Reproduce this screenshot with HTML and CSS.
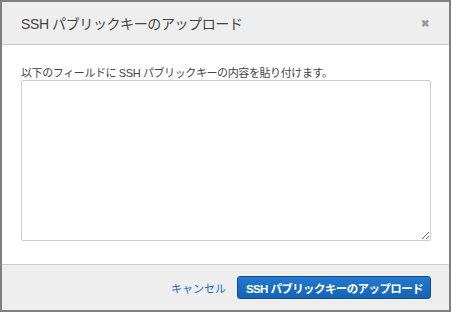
FILE: index.html
```html
<!DOCTYPE html>
<html lang="ja">
<head>
<meta charset="utf-8">
<link rel="stylesheet" href="styles.css">
</head>
<body>
<div class="modal">
  <div class="modal-header">
    <h1 class="modal-title">SSH パブリックキーのアップロード</h1>
    <span class="close">&#x2716;</span>
  </div>
  <div class="modal-body">
    <p class="hint">以下のフィールドに SSH パブリックキーの内容を貼り付けます。</p>
    <textarea class="key-input"></textarea>
  </div>
  <div class="modal-footer">
    <a class="cancel">キャンセル</a>
    <button class="primary">SSH パブリックキーのアップロード</button>
  </div>
</div>
</body>
</html>
```
FILE: styles.css
```css
html, body {
  margin: 0;
  padding: 0;
  background: #fff;
}
.modal {
  width: 451px;
  height: 312px;
  box-sizing: border-box;
  border: 2px solid #7f7f7f;
  display: flex;
  flex-direction: column;
  font-family: "Liberation Sans", "Noto Sans CJK JP", sans-serif;
}
.modal-header {
  height: 42px;
  background: #eeeeee;
  border-bottom: 1px solid #cccccc;
  display: flex;
  align-items: center;
  justify-content: space-between;
  padding: 0 20px 0 19px;
}
.modal-title {
  margin: 0;
  font-size: 14px;
  font-weight: normal;
  color: #444;
  letter-spacing: -0.4px;
}
.close {
  font-size: 10px;
  color: #999;
  font-weight: bold;
}
.modal-body {
  flex: 1;
  padding: 0 18px 0 19px;
  display: flex;
  flex-direction: column;
}
.hint {
  margin: 21px 0 0 0;
  font-size: 11px;
  color: #444;
  letter-spacing: -0.4px;
  line-height: 14px;
}
.key-input {
  height: 161px;
  box-sizing: border-box;
  border: 1px solid #cccccc;
  border-radius: 2px;
  resize: vertical;
  margin: 0;
}
.modal-footer {
  height: 45px;
  background: #eeeeee;
  border-top: 1px solid #cccccc;
  display: flex;
  align-items: center;
  justify-content: flex-end;
  gap: 11px;
  padding: 0 18px 0 0;
}
.cancel {
  color: #1a6cc0;
  font-size: 11px;
}
.primary {
  height: 23px;
  padding: 0 7px 0 8px;
  border: 1px solid #0f4f90;
  border-radius: 3px;
  background: linear-gradient(#2478cf, #1464b4);
  color: #fff;
  font-family: inherit;
  font-size: 11.5px;
  font-weight: bold;
  letter-spacing: -0.6px;
}
```
